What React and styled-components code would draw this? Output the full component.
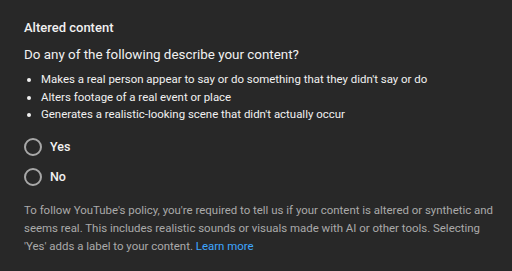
import React from "react";
import styled, { createGlobalStyle } from "styled-components";

const Global = createGlobalStyle`
  html, body { margin: 0; padding: 0; background: #282828; }
  body { font-family: Roboto, "Noto Sans", sans-serif; -webkit-font-smoothing: antialiased; }
`;

const Panel = styled.div`
  width: 512px;
  height: 271px;
  box-sizing: border-box;
  background: #282828;
  padding: 20px 8px 0 24px;
  color: #f1f1f1;
`;

const Title = styled.h2`
  margin: 0;
  font-size: 13px;
  line-height: 16px;
  font-weight: 500;
  color: #f1f1f1;
`;

const Question = styled.p`
  margin: 10px 0 0;
  font-size: 13.4px;
  line-height: 18px;
  font-weight: 400;
  color: #f1f1f1;
`;

const List = styled.ul`
  margin: 7.4px 0 0;
  padding: 0 0 0 17px;
  font-size: 11.45px;
  line-height: 17.3px;
  color: #f1f1f1;
`;

const RadioGroup = styled.div`
  display: flex;
  flex-direction: column;
  gap: 12px;
  margin-top: 14.7px;
`;

const RadioRow = styled.label`
  display: flex;
  align-items: center;
  gap: 8px;
  height: 18px;
  font-size: 12.5px;
  line-height: 18px;
  font-weight: 500;
  color: #f1f1f1;
`;

const Circle = styled.span`
  width: 18px;
  height: 18px;
  box-sizing: border-box;
  border: 2px solid #a8a8a8;
  border-radius: 50%;
  flex: none;
`;

const Note = styled.p`
  margin: 16.5px 0 0;
  font-size: 11.45px;
  line-height: 17.8px;
  color: #aaaaaa;
`;

const Link = styled.a`
  color: #3ea6ff;
  text-decoration: none;
`;

export default function App() {
  return (
    <>
      <Global />
      <Panel>
        <Title>Altered content</Title>
        <Question>Do any of the following describe your content?</Question>
        <List>
          <li>Makes a real person appear to say or do something that they didn't say or do</li>
          <li>Alters footage of a real event or place</li>
          <li>Generates a realistic-looking scene that didn't actually occur</li>
        </List>
        <RadioGroup>
          <RadioRow><Circle />Yes</RadioRow>
          <RadioRow><Circle />No</RadioRow>
        </RadioGroup>
        <Note>
          To follow YouTube's policy, you're required to tell us if your content is altered or synthetic and seems real. This includes realistic sounds or visuals made with AI or other tools. Selecting 'Yes' adds a label to your content. <Link href="#">Learn more</Link>
        </Note>
      </Panel>
    </>
  );
}
